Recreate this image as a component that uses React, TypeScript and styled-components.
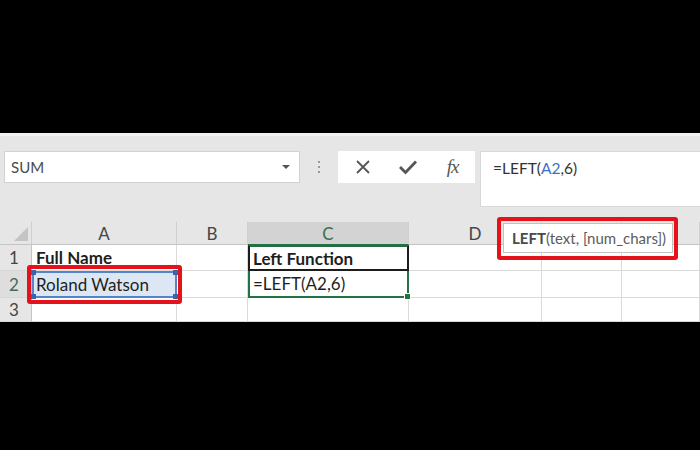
import React from "react";
import styled, { createGlobalStyle } from "styled-components";

const GlobalStyle = createGlobalStyle`
  html, body {
    margin: 0;
    padding: 0;
    background: #000;
  }
  body {
    width: 700px;
    height: 450px;
    overflow: hidden;
    font-family: Lato, "Liberation Sans", sans-serif;
  }
`;

const Screen = styled.div`
  width: 700px;
  height: 450px;
  background: #000;
  display: flex;
  flex-direction: column;
  overflow: hidden;
`;

const Band = styled.div<{ $h: number }>`
  flex: none;
  height: ${(p) => p.$h}px;
  background: #000;
`;

const Toolbar = styled.div`
  flex: none;
  height: 89px;
  box-sizing: border-box;
  background: #e6e6e6;
  border-top: 3px solid #f2f2f2;
  padding: 15px 0 0 4px;
  display: flex;
  align-items: flex-start;
`;

const NameBox = styled.div`
  width: 296px;
  height: 32px;
  box-sizing: border-box;
  background: #fff;
  border: 1px solid #d2d2d2;
  display: flex;
  align-items: center;
  justify-content: space-between;
  padding: 0 9px 0 6px;
  font-size: 15px;
  color: #4a4a4a;
`;

const Caret = styled.span`
  width: 0;
  height: 0;
  border-left: 4px solid transparent;
  border-right: 4px solid transparent;
  border-top: 4px solid #555;
`;

const Grip = styled.div`
  width: 38px;
  height: 32px;
  display: flex;
  flex-direction: column;
  align-items: center;
  justify-content: center;
  gap: 3px;

  span {
    width: 2px;
    height: 2px;
    background: #9a9a9a;
  }
`;

const IconBox = styled.div`
  width: 137px;
  height: 32px;
  background: #fff;
  display: flex;
  align-items: center;
  padding-left: 2px;
  box-sizing: border-box;
`;

const IconSlot = styled.div`
  width: 45px;
  height: 32px;
  display: flex;
  align-items: center;
  justify-content: center;
  color: #555;
`;

const Fx = styled.span`
  font-family: "Liberation Serif", serif;
  font-style: italic;
  font-size: 19px;
  color: #555;
  letter-spacing: -1px;
`;

const FormulaBar = styled.div`
  flex: 1;
  margin-left: 5px;
  height: 56px;
  box-sizing: border-box;
  background: #fff;
  border: 1px solid #d8d8d8;
  border-right: none;
  padding: 7px 0 0 12px;
  font-size: 15.5px;
  line-height: 18px;
  color: #333;
`;

const Ref = styled.span`
  color: #3f6fc4;
`;

const Sheet = styled.div`
  position: relative;
  flex: none;
  height: 100px;
  background: #fff;
  display: grid;
  grid-template-columns: 32px 145px 71px 161px 133px 80px 78px;
  grid-template-rows: 23px 26px 27px 24px;
`;

const Corner = styled.div`
  background: #e6e6e6;
  border-right: 1px solid #cfcfcf;
  border-bottom: 1px solid #c4c4c4;
  position: relative;

  &::after {
    content: "";
    position: absolute;
    right: 3px;
    bottom: 3px;
    width: 0;
    height: 0;
    border-left: 14px solid transparent;
    border-bottom: 14px solid #c4c4c4;
  }
`;

const ColHead = styled.div<{ $active?: boolean }>`
  background: ${(p) => (p.$active ? "#d3d3d3" : "#e6e6e6")};
  border-right: 1px solid #d0d0d0;
  border-bottom: 1px solid ${(p) => (p.$active ? "#217346" : "#c4c4c4")};
  display: flex;
  align-items: center;
  justify-content: center;
  font-size: 17px;
  color: ${(p) => (p.$active ? "#3b6e4f" : "#444")};
`;

const RowHead = styled.div<{ $active?: boolean }>`
  background: ${(p) => (p.$active ? "#dedede" : "#e6e6e6")};
  border-right: 1px solid #c4c4c4;
  border-bottom: 1px solid #d6d6d6;
  display: flex;
  align-items: center;
  padding-left: 9px;
  font-size: 17px;
  color: ${(p) => (p.$active ? "#4a6a55" : "#444")};
`;

const Cell = styled.div<{ $bold?: boolean }>`
  border-right: 1px solid #dadada;
  border-bottom: 1px solid #dadada;
  display: flex;
  align-items: center;
  padding-left: 4px;
  font-size: 17px;
  font-weight: ${(p) => (p.$bold ? 700 : 400)};
  color: #1e1e1e;
  white-space: nowrap;
  overflow: visible;
`;

const SelectedCell = styled(Cell)`
  position: relative;
  background: #dde7f4;
  border: 2px solid #5584c8;
  padding-left: 2px;

  i {
    position: absolute;
    width: 5px;
    height: 5px;
    background: #3a65a8;
  }
`;

const HeadingCell = styled(Cell)`
  border: 2px solid #1c1c1c;
  border-top-color: #2a6a44;
  padding-left: 3px;
`;

const ActiveCell = styled(Cell)`
  position: relative;
  border: 2px solid #217346;
  border-top: none;
  padding-left: 3px;

  &::after {
    content: "";
    position: absolute;
    right: -4px;
    bottom: -4px;
    width: 5px;
    height: 5px;
    background: #217346;
    border: 1px solid #fff;
  }
`;

const Tip = styled.div`
  position: absolute;
  left: 503px;
  top: 1px;
  width: 170px;
  height: 30px;
  box-sizing: border-box;
  background: #fff;
  border: 1px solid #c2c2c2;
  display: flex;
  align-items: center;
  padding-left: 8px;
  font-size: 15px;
  color: #5c5c5c;

  b {
    color: #4a4a4a;
  }
`;

const Mark = styled.div<{ $x: number; $y: number; $w: number; $h: number }>`
  position: absolute;
  left: ${(p) => p.$x}px;
  top: ${(p) => p.$y}px;
  width: ${(p) => p.$w}px;
  height: ${(p) => p.$h}px;
  box-sizing: border-box;
  border: 4px solid #e4121b;
  border-radius: 3px;
  pointer-events: none;
`;

const CrossIcon = () => (
  <svg width="18" height="18" viewBox="0 0 18 18">
    <path d="M3 3 L15 15 M15 3 L3 15" stroke="#555" strokeWidth="1.8" fill="none" />
  </svg>
);

const CheckIcon = () => (
  <svg width="20" height="18" viewBox="0 0 20 18">
    <path d="M2 9 L7.5 14.5 L18 3.5" stroke="#555" strokeWidth="2.8" fill="none" />
  </svg>
);

const cols = ["A", "B", "C", "D", "", ""];

export default function App() {
  return (
    <>
      <GlobalStyle />
      <Screen>
        <Band $h={133} />
        <Toolbar>
          <NameBox>
            SUM
            <Caret />
          </NameBox>
          <Grip>
            <span />
            <span />
            <span />
          </Grip>
          <IconBox>
            <IconSlot>
              <CrossIcon />
            </IconSlot>
            <IconSlot>
              <CheckIcon />
            </IconSlot>
            <IconSlot>
              <Fx>fx</Fx>
            </IconSlot>
          </IconBox>
          <FormulaBar>
            =LEFT(<Ref>A2</Ref>,6)
          </FormulaBar>
        </Toolbar>
        <Sheet>
          <Corner />
          {cols.map((c, i) => (
            <ColHead key={i} $active={c === "C"}>
              {c}
            </ColHead>
          ))}

          <RowHead>1</RowHead>
          <Cell $bold>Full Name</Cell>
          <Cell />
          <HeadingCell $bold>Left Function</HeadingCell>
          <Cell />
          <Cell />
          <Cell />

          <RowHead $active>2</RowHead>
          <SelectedCell>
            Roland Watson
            <i style={{ left: -3, top: -3 }} />
            <i style={{ right: -3, top: -3 }} />
            <i style={{ left: -3, bottom: -3 }} />
            <i style={{ right: -3, bottom: -3 }} />
          </SelectedCell>
          <Cell />
          <ActiveCell>=LEFT(A2,6)</ActiveCell>
          <Cell />
          <Cell />
          <Cell />

          <RowHead>3</RowHead>
          <Cell />
          <Cell />
          <Cell />
          <Cell />
          <Cell />
          <Cell />

          <Tip>
            <b>LEFT</b>(text, [num_chars])
          </Tip>
          <Mark $x={497} $y={-5} $w={181} $h={43} />
          <Mark $x={27} $y={43} $w={155} $h={39} />
        </Sheet>
        <Band $h={128} />
      </Screen>
    </>
  );
}
